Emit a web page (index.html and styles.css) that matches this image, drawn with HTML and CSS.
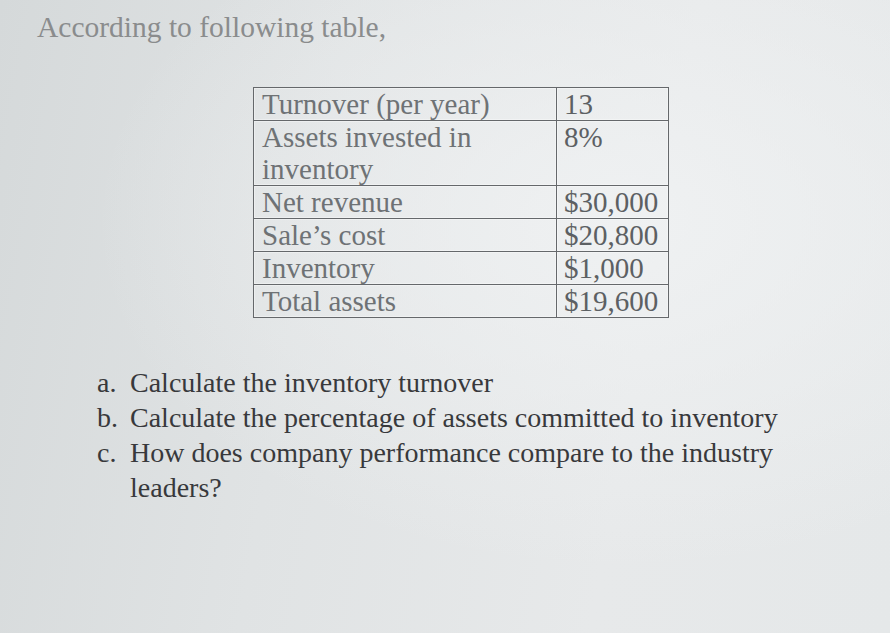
FILE: index.html
```html
<!DOCTYPE html>
<html>
<head>
<meta charset="utf-8">
<link rel="stylesheet" href="styles.css">
</head>
<body>
<div class="page">
  <h1 class="title">According to following table,</h1>
  <table class="data">
    <tr><td class="label">Turnover (per year)</td><td class="val">13</td></tr>
    <tr><td class="label">Assets invested in<br>inventory</td><td class="val top">8%</td></tr>
    <tr><td class="label">Net revenue</td><td class="val">$30,000</td></tr>
    <tr><td class="label">Sale’s cost</td><td class="val">$20,800</td></tr>
    <tr><td class="label">Inventory</td><td class="val">$1,000</td></tr>
    <tr><td class="label">Total assets</td><td class="val">$19,600</td></tr>
  </table>
  <ol class="questions">
    <li><span class="m">a.</span><span class="t">Calculate the inventory turnover</span></li>
    <li><span class="m">b.</span><span class="t">Calculate the percentage of assets committed to inventory</span></li>
    <li><span class="m">c.</span><span class="t">How does company performance compare to the industry leaders?</span></li>
  </ol>
</div>
</body>
</html>
```
FILE: styles.css
```css
html, body {
  margin: 0;
  padding: 0;
  height: 100%;
}
body {
  background:
    radial-gradient(ellipse at 70% 35%, rgba(240,242,243,0.9) 0%, rgba(240,242,243,0) 60%),
    linear-gradient(100deg, #d5d9da 0%, #e0e3e4 35%, #e7e9ea 70%, #e5e8e9 100%);
  font-family: "Liberation Serif", "Times New Roman", serif;
  overflow: hidden;
}
.page {
  display: flex;
  flex-direction: column;
  padding: 9px 0 0 37px;
}
.title {
  margin: 0;
  font-size: 29.5px;
  font-weight: normal;
  line-height: 36px;
  color: #8a8c8d;
}
.data {
  margin: 42px 0 0 216px;
  border-collapse: collapse;
  border: 1px solid #65686b;
  font-size: 29px;
  color: #6e7275;
  width: 416px;
}
.data td {
  border: 1px solid #65686b;
  padding: 0 8px;
  line-height: 32px;
  vertical-align: bottom;
  box-shadow: inset 0 0 0 1px rgba(255,255,255,0.35);
}
.data .label {
  width: 286px;
}
.data .val {
  color: #5c6063;
  padding-left: 7px;
}
.data .val.top {
  vertical-align: top;
}
.questions {
  list-style: none;
  margin: 47px 0 0 60px;
  padding: 0;
  width: 740px;
  font-size: 28px;
  line-height: 35px;
  color: #38393c;
}
.questions li {
  display: flex;
}
.questions .m {
  width: 33px;
  flex: none;
}
.questions .t {
  width: 690px;
}
```
